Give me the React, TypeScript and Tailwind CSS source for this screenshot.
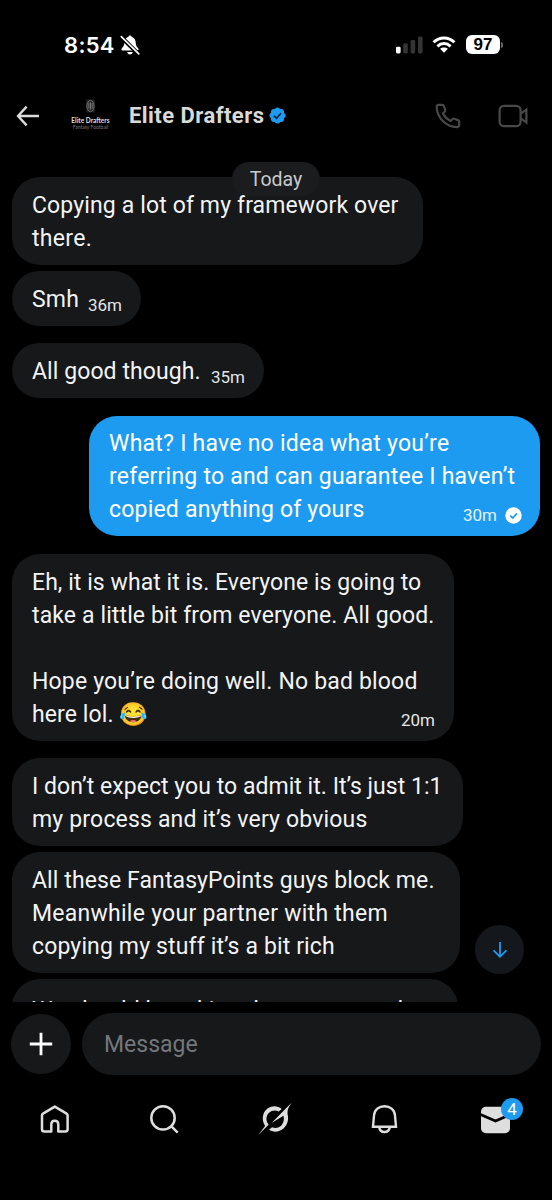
import React from 'react';

type Line = { text: string; track?: string; emoji?: string };
type Message = {
  id: number;
  lines: Line[];
  box: string;
  time?: string;
  mine?: boolean;
};

const MESSAGES: Message[] = [
  {
    id: 1,
    box: 'w-[411px] pt-[12px]',
    lines: [
      { text: 'Copying a lot of my framework over', track: 'tracking-[0.13px]' },
      { text: 'there.', track: 'tracking-[0.3px]' },
    ],
  },
  { id: 2, box: 'w-[129px] mt-[6px] pt-[12px]', time: '36m', lines: [{ text: 'Smh', track: 'tracking-[0.2px]' }] },
  { id: 3, box: 'w-[252px] mt-[17px] pt-[12px]', time: '35m', lines: [{ text: 'All good though.', track: 'tracking-[0.08px]' }] },
  {
    id: 4,
    box: 'w-[451px] mt-[18px] pt-[11px]',
    time: '30m',
    mine: true,
    lines: [
      { text: 'What? I have no idea what you’re', track: 'tracking-[0.24px]' },
      { text: 'referring to and can guarantee I haven’t', track: 'tracking-[0.22px]' },
      { text: 'copied anything of yours', track: 'tracking-[0.2px]' },
    ],
  },
  {
    id: 5,
    box: 'w-[442px] mt-[18px] pt-[12px]',
    time: '20m',
    lines: [
      { text: 'Eh, it is what it is. Everyone is going to', track: 'tracking-[0.06px]' },
      { text: 'take a little bit from everyone. All good.', track: 'tracking-[0.12px]' },
      { text: '' },
      { text: 'Hope you’re doing well. No bad blood', track: 'tracking-[0.17px]' },
      { text: 'here lol. ', track: 'tracking-[0.1px]', emoji: '😂' },
    ],
  },
  {
    id: 6,
    box: 'w-[451px] mt-[17px] pt-[12px]',
    lines: [
      { text: 'I don’t expect you to admit it. It’s just 1:1', track: 'tracking-[0.04px]' },
      { text: 'my process and it’s very obvious', track: 'tracking-[0.17px]' },
    ],
  },
  {
    id: 7,
    box: 'w-[448px] mt-[6px] pt-[12px]',
    lines: [
      { text: 'All these FantasyPoints guys block me.', track: 'tracking-[0.1px]' },
      { text: 'Meanwhile your partner with them', track: 'tracking-[0.26px]' },
      { text: 'copying my stuff it’s a bit rich', track: 'tracking-[0.14px]' },
    ],
  },
  {
    id: 8,
    box: 'w-[446px] mt-[6px] pt-[15px]',
    lines: [
      { text: 'We should be taking them out together', track: 'tracking-[0.1px]' },
      { text: '' },
    ],
  },
];

const StatusBar = () => (
  <div className="h-[90px] shrink-0 flex items-start justify-between pt-[35px] pl-[64px] pr-[49px]">
    <div className="flex items-center h-5">
      <span className="font-['Inter'] font-semibold text-[22px] leading-5 tracking-[0.3px] text-white">8:54</span>
      <svg viewBox="0 0 20 20" className="w-5 h-5 ml-[5px]">
        <path d="M10 0.5C9 .5 8.6 1.1 8.4 1.8C5.6 2.6 4.4 5 4.3 7.6C4.2 11 3.1 12 1.7 13.6C1 14.5 1.4 15.6 2.6 15.6H17.4C18.6 15.6 19 14.5 18.3 13.6C16.9 12 15.8 11 15.7 7.6C15.6 5 14.4 2.6 11.6 1.8C11.4 1.1 11 .5 10 .5Z" fill="#fff" />
        <path d="M7.2 17H12.8C12.5 18.6 11.5 19.5 10 19.5S7.5 18.6 7.2 17Z" fill="#fff" />
        <path d="M0.6 1.4L18.6 19.2" stroke="#000" strokeWidth="4.2" />
        <path d="M1.3 1.6L18.8 18.9" stroke="#fff" strokeWidth="1.6" strokeLinecap="round" />
      </svg>
    </div>
    <div className="flex items-center h-5">
      <svg viewBox="0 0 27 18" className="w-[27px] h-[18px]">
        <rect x="0" y="10.8" width="4.6" height="6.6" rx="1.3" fill="#fff" />
        <rect x="7.2" y="7.4" width="4.6" height="10" rx="1.3" fill="#343434" />
        <rect x="14.6" y="4" width="4.6" height="13.4" rx="1.3" fill="#343434" />
        <rect x="22" y="0.4" width="4.6" height="17" rx="1.3" fill="#343434" />
      </svg>
      <svg viewBox="0 0 24 17" className="w-6 h-[17px] ml-[9px] -mt-px">
        <g fill="none" stroke="#fff" strokeWidth="3">
          <path d="M1.6 6.3C7.4 .6 16.6 .6 22.4 6.3" />
          <path d="M5.4 10.3C9.2 6.7 14.8 6.7 18.6 10.3" />
        </g>
        <path d="M12 16.7L8.1 12.8C10.3 10.9 13.7 10.9 15.9 12.8Z" fill="#fff" />
      </svg>
      <div className="ml-[10px] w-[34px] h-[19px] -mt-px rounded-[6px] bg-white flex items-center justify-center font-['Liberation_Sans'] font-bold text-[17px] leading-none text-black">
        97
      </div>
      <div className="ml-[1px] w-[2px] h-[6px] rounded-r-full bg-[#666]" />
    </div>
  </div>
);

const Header = () => (
  <div className="h-[51px] shrink-0 flex items-center pl-4 pr-6">
    <svg viewBox="0 0 24 22" className="w-6 h-[22px]" fill="none" stroke="#dcdcdc" strokeWidth="2.3">
      <path d="M23 11H2.4M10.6 1.6L2 11L10.6 20.4" strokeLinejoin="miter" />
    </svg>
    <div className="ml-[29px] w-[43px] flex flex-col items-center -mt-px">
      <svg viewBox="0 0 10 15" className="w-[9px] h-[14px]">
        <rect x="0.3" y="0.3" width="9.4" height="14.4" fill="#222" />
        <ellipse cx="5" cy="7.5" rx="4" ry="6.2" fill="none" stroke="#777" strokeWidth="1" />
        <path d="M5 3.5V11.5M3.2 4V10.5M6.8 4V10.5" stroke="#999" strokeWidth="0.8" />
      </svg>
      <span className="mt-[4px] font-['Lato'] font-bold text-[6.5px] leading-[7px] text-[#ddd] whitespace-nowrap">Elite Drafters</span>
      <span className="font-['Lato'] text-[5px] leading-[7px] text-[#777] whitespace-nowrap">Fantasy Football</span>
    </div>
    <span className="ml-[17px] font-bold text-[22px] leading-7 tracking-[0.45px] text-[#d9d9d9] whitespace-nowrap">Elite Drafters</span>
    <svg viewBox="0 0 22 22" className="w-[19px] h-[19px] ml-[4px]">
      <path
        fill="#1d9bf0"
        d="M20.396 11c-.018-.646-.215-1.275-.57-1.816-.354-.54-.852-.972-1.438-1.246.223-.607.27-1.264.14-1.897-.131-.634-.437-1.218-.882-1.687-.47-.445-1.053-.75-1.687-.882-.633-.13-1.29-.083-1.897.14-.273-.587-.704-1.086-1.245-1.44S11.647 1.62 11 1.604c-.646.017-1.273.213-1.813.568s-.969.854-1.24 1.44c-.608-.223-1.267-.272-1.902-.14-.635.13-1.22.436-1.69.882-.445.47-.749 1.055-.878 1.688-.13.633-.08 1.29.144 1.896-.587.274-1.087.705-1.443 1.245-.356.54-.555 1.17-.574 1.817.02.647.218 1.276.574 1.817.356.54.856.972 1.443 1.245-.224.606-.274 1.263-.144 1.896.13.634.433 1.218.877 1.688.47.443 1.054.747 1.687.878.633.132 1.29.084 1.897-.136.274.586.705 1.084 1.246 1.439.54.354 1.17.551 1.816.569.647-.016 1.276-.213 1.817-.567s.972-.854 1.245-1.44c.604.239 1.266.296 1.903.164.636-.132 1.22-.447 1.68-.907.46-.46.776-1.044.908-1.681s.075-1.299-.165-1.903c.586-.274 1.084-.705 1.439-1.246.354-.54.551-1.17.569-1.816z"
      />
      <path d="M6.8 11.3L9.8 14.2L15 8.4" fill="none" stroke="#04223a" strokeWidth="1.9" />
    </svg>
    <svg viewBox="0 0 26 26" className="w-[26px] h-[26px] ml-auto" fill="none" stroke="#484848" strokeWidth="2.2" strokeLinejoin="round">
      <path d="M3.6 1.9H7.4C8.2 1.9 8.7 2.3 8.9 3L10.2 6.9C10.4 7.6 10.2 8.3 9.7 8.8L8 10.4C9.8 13.9 12.3 16.3 15.7 18L17.3 16.3C17.8 15.8 18.5 15.6 19.2 15.8L23.1 17.1C23.8 17.3 24.2 17.9 24.2 18.6V22C24.2 23.4 23.1 24.3 21.8 24.2C10.8 23.6 2.3 15 1.7 4.2C1.6 2.9 2.4 1.9 3.6 1.9Z" />
    </svg>
    <svg viewBox="0 0 30 24" className="w-[30px] h-6 ml-[37px]" fill="none" stroke="#484848" strokeWidth="2.2">
      <rect x="1.6" y="1.8" width="21" height="20.4" rx="4.5" />
      <path d="M22.8 9.6L28.4 5.6V18.6L22.8 14.4" />
    </svg>
  </div>
);

const SentCheck = () => (
  <svg viewBox="0 0 18 18" className="w-[17px] h-[17px] ml-[8px]">
    <circle cx="9" cy="9" r="8.7" fill="#fff" />
    <path d="M5.6 9.2L8.1 11.7L12.6 6.8" fill="none" stroke="#1d9bf0" strokeWidth="1.9" />
  </svg>
);

const Bubble = ({ msg }: { msg: Message }) => (
  <div
    className={`${msg.box} shrink-0 rounded-[28px] pb-[10px] pl-[20px] text-[23px] leading-[33px] whitespace-nowrap ${
      msg.mine ? 'self-end bg-[#1d9bf0] pr-[18px] text-white' : 'self-start bg-[#16181a] pr-[19px] text-[#f2f3f4]'
    }`}
  >
    {msg.lines.map((line, i) => (
      <div key={i} className="h-[33px] flex items-end justify-between">
        <span className={line.track}>
          {line.text}
          {line.emoji && <span>{line.emoji}</span>}
        </span>
        {msg.time && i === msg.lines.length - 1 && (
          <span className={`flex items-center text-[17px] leading-5 mb-[1px] ${msg.mine ? 'text-[#e3f2fd]' : 'text-[#e4e6e7]'}`}>
            {msg.time}
            {msg.mine && <SentCheck />}
          </span>
        )}
      </div>
    ))}
  </div>
);

const Composer = () => (
  <div className="h-[74px] shrink-0 flex items-center gap-[11px] pt-[10px] pb-[1px] pl-[11px] pr-[11px]">
    <button className="w-[60px] h-[60px] shrink-0 rounded-full bg-[#16181a] flex items-center justify-center">
      <svg viewBox="0 0 24 24" className="w-6 h-6" stroke="#fff" strokeWidth="2.8">
        <path d="M12 0.8V23.2M0.8 12H23.2" />
      </svg>
    </button>
    <div className="flex-1 h-[62px] rounded-full bg-[#16181a] flex items-center pl-[22px] pt-[3px] text-[23px] text-[#73777b]">Message</div>
  </div>
);

const TabBar = () => (
  <div className="flex-1 flex items-start justify-between pt-[24px] pl-[38px] pr-[38px]">
    <svg viewBox="0 0 34 38" className="w-[34px] h-[38px]" fill="none" stroke="#dedede" strokeWidth="2.5" strokeLinejoin="round">
      <path d="M16.8 6.6L28.6 13.6C29.3 14 29.6 14.6 29.6 15.4V29C29.6 30.6 28.7 31.6 27.2 31.6H20.3V24.5C20.3 22.3 18.9 20.8 16.8 20.8S13.3 22.3 13.3 24.5V31.6H6.4C4.9 31.6 4 30.6 4 29V15.4C4 14.6 4.3 14 5 13.6Z" />
    </svg>
    <svg viewBox="0 0 34 38" className="w-[34px] h-[38px]" fill="none" stroke="#dedede" strokeWidth="2.5">
      <circle cx="16" cy="17.9" r="11.7" />
      <path d="M24.2 26.1L30.7 32.6" />
    </svg>
    <svg viewBox="0 0 38 38" className="w-[38px] h-[38px]" fill="#dedede">
      <path d="M25.7 9.1C19.6 3.6 10.2 6.7 7.5 14C6.1 18.2 6.7 22.3 9.1 25.9C7.4 28.2 5 31.2 2.2 35.4C5.2 32 9.4 28 12.7 24.8C9.7 21.3 9.7 16.2 12.8 13.1C15.6 10.3 19.6 9.9 22.8 11.5Z" />
      <path d="M35.8 2.6C33 6.6 31.2 9.3 31.6 14.3C33 19.7 31.4 25.1 27.5 28.5C23.3 32.2 17.4 32.6 13 29.8L16 27.2C19.5 28.7 23.3 27.8 25.8 24.9C27.8 22.4 28.3 19.3 27.5 15.8L15.6 22.9L28.3 10.1Z" />
    </svg>
    <svg viewBox="1.5 0 34 38" className="w-[34px] h-[38px]" fill="none" stroke="#dedede" strokeWidth="2.4">
      <path d="M5.5 26.7L6.5 15.5C7 9.7 11.5 6.2 17 6.2S27 9.7 27.5 15.5L28.5 26.7Z" />
      <path d="M11.7 27C12.1 30.2 14 32 17 32S21.9 30.2 22.3 27" />
    </svg>
    <div className="relative w-[36px] h-[38px]">
      <svg viewBox="0 0 36 38" className="w-[36px] h-[38px]">
        <rect x="3" y="6.8" width="29" height="26.5" rx="5" fill="#dedede" />
        <path d="M2.5 14.5L17.5 21L32.5 14.5" fill="none" stroke="#000" strokeWidth="2.8" />
      </svg>
      <span className="absolute -top-[2px] left-[23px] w-[22px] h-[22px] rounded-full bg-[#1d9bf0] text-white text-[17px] leading-[22px] text-center">4</span>
    </div>
  </div>
);

export default function App() {
  return (
    <div className="w-[552px] h-[1200px] bg-black overflow-hidden flex flex-col font-['Roboto',sans-serif]">
      <StatusBar />
      <Header />

      {/* Conversation */}
      <div className="relative h-[861px] shrink-0 overflow-hidden">
        <div className="flex flex-col pt-[36px] px-[12px]">
          {MESSAGES.map((msg) => (
            <Bubble key={msg.id} msg={msg} />
          ))}
        </div>
        <div className="absolute top-[21px] left-[232px] w-[88px] h-[34px] rounded-full bg-[#1b1c1e] text-center text-[19.5px] leading-[36px] text-[#c6c9cb]">
          Today
        </div>
        <button className="absolute top-[784px] left-[475px] w-[49px] h-[49px] rounded-full bg-[#14181c] flex items-center justify-center">
          <svg viewBox="0 0 16 18" className="w-4 h-[18px]" fill="none" stroke="#1d9bf0" strokeWidth="1.8">
            <path d="M8 1V15.8M1.6 9.4L8 15.8L14.4 9.4" />
          </svg>
        </button>
      </div>

      <Composer />
      <TabBar />
    </div>
  );
}
